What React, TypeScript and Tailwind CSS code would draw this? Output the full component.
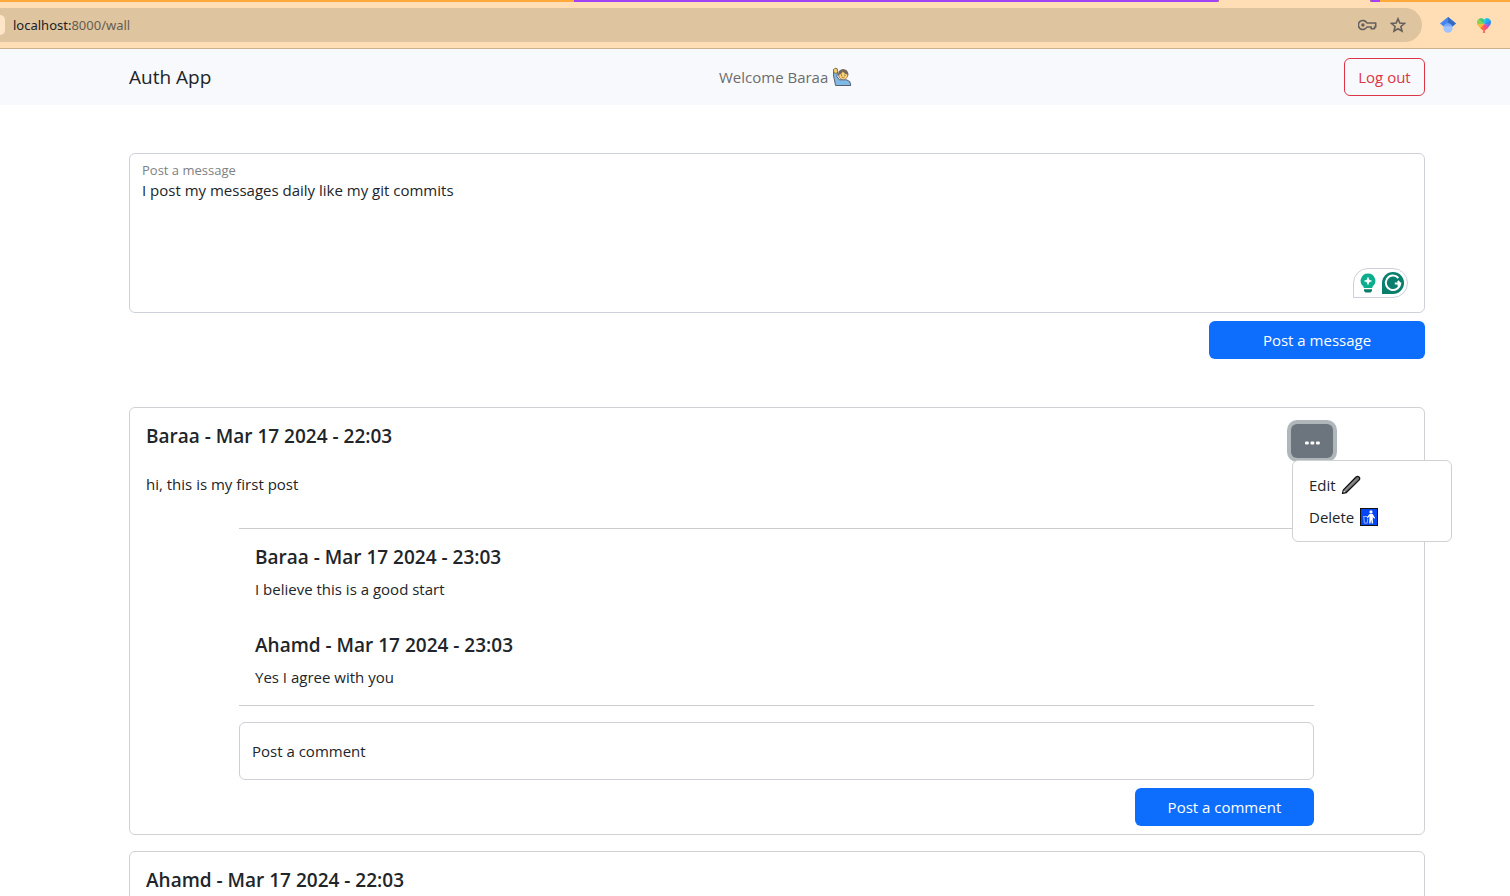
import React from "react";

function WaveEmoji() {
  return (
    <svg className="h-5 w-5" viewBox="0 0 20 20" aria-hidden="true">
      <path d="M1.500 2.500 4.600 1.500 5.600 4.500 4.900 9.600 7.500 12.800H14.500L17.800 14.600 18.800 18.500H3.600L1.600 9Z" fill="#7fb9e6" stroke="#5b6068" strokeWidth="1" strokeLinejoin="round" />
      <path d="M1.400 2.800 3 1.200 5.200 1.800 5.700 4.600 4.600 6.400 2 5.800Z" fill="#f6cf73" stroke="#6b5a45" strokeWidth=".7" />
      <circle cx="11.200" cy="7.300" r="5.200" fill="#75665a" />
      <path d="M7 7.800C9.200 7.400 10.200 6 10.800 4.600c1 1.600 2.600 2.600 4.600 2.800.2 3-1.600 4.800-4.200 4.800S7.200 10.600 7 7.800Z" fill="#fbd276" />
      <circle cx="9.600" cy="8.100" r=".6" fill="#444" />
      <circle cx="12.900" cy="8.100" r=".6" fill="#444" />
      <path d="M9.700 10q1.500 1.200 3 0" fill="none" stroke="#9a5b3c" strokeWidth=".7" />
    </svg>
  );
}

function PenEmoji() {
  return (
    <svg className="h-5 w-5" viewBox="0 0 20 20" aria-hidden="true">
      <path d="M1.500 18.400 2.400 14.900 14.800 2.200q1.800-1.500 3.200-.2t0 3.100L5.300 17.500Z" fill="#767676" stroke="#111" strokeWidth="1.300" strokeLinejoin="round" />
      <path d="m4.200 15.300 10.600-10.700" stroke="#9c9c9c" strokeWidth="1" />
      <path d="m2.300 17.600.6-2.200 1.600 1.500Z" fill="#ddd" />
    </svg>
  );
}

function LitterEmoji() {
  return (
    <svg className="h-5 w-5" viewBox="0 0 20 20" aria-hidden="true">
      <rect x="1.500" y="1.500" width="17" height="17" fill="#0546f5" stroke="#111" />
      <circle cx="12" cy="4.900" r="1.600" fill="#fff" />
      <path d="M10.500 7h3.200l2.400 4-.9.7-1.400-1.800.2 6.600h-1.300l-.5-4-.7 4h-1.300l.3-7.200-1.800 1.900-.9-.6Z" fill="#fff" />
      <path d="M4.200 9.500h4.400M4.800 9.500l.5 6.600h3l.4-4.400" fill="none" stroke="#b9ccff" strokeWidth=".8" />
    </svg>
  );
}

function BrowserBar() {
  return (
    <div className="border-b border-[#cbb18e] bg-[#ffddb5]">
      <div className="flex h-0.5 bg-[#ffa93b]" aria-hidden="true">
        <div className="w-[38%]" />
        <div className="grow rounded-br-full bg-[#a142f4]" />
        <div className="w-[10%] bg-[#ffddb5]" />
        <div className="w-2.5 rounded-bl-full bg-[#a142f4]" />
        <div className="w-[130px]" />
      </div>
      <div className="flex items-center pt-1.5 pb-1.5 pr-[18px]">
        <div className="flex h-[34px] grow items-center overflow-hidden rounded-r-full bg-[#dfc4a0] pr-4">
          <div className="h-5 w-[5px] rounded-r-full bg-[#ffe5c7]" />
          <span className="grow pl-2 font-['Noto_Sans'] text-[13px] leading-5 text-[#675c4f]">
            <span className="text-[#202124]">localhost:</span>8000/wall
          </span>
          <button type="button" aria-label="Saved passwords" className="mr-3 text-[#65605b]">
            <svg className="h-5 w-5" viewBox="0 0 20 20" fill="none" stroke="currentColor">
              <path d="M8.900 8H17.700V12H16.500V13.800H13.200V12H8.900A4.500 4.500 0 1 1 8.900 8Z" strokeWidth="1.600" strokeLinejoin="round" />
              <circle cx="4.900" cy="10" r="1.700" fill="currentColor" stroke="none" />
            </svg>
          </button>
          <button type="button" aria-label="Bookmark this page" className="text-[#65605b]">
            <svg className="h-4 w-4" viewBox="0 0 16 16" fill="none" stroke="currentColor" strokeWidth="1.600">
              <path d="m8 1.800 1.800 4.300 4.700.4-3.600 3 1.100 4.600L8 11.700l-4 2.400 1.100-4.600-3.600-3 4.700-.4Z" />
            </svg>
          </button>
        </div>
        <button type="button" aria-label="Scholar extension" className="ml-[18px]">
          <svg className="h-4 w-4" viewBox="0 0 16 16">
            <path d="M8 0 0 6.500 4 9.800h8l4-3.300Z" fill="#4285f4" />
            <path d="m8 0 8 6.500-4 3.300L8 6.500Z" fill="#356ac3" />
            <circle cx="8" cy="11.200" r="4.600" fill="#a0c3ff" />
            <path d="M3.800 9.300a4.600 4.600 0 0 1 8.400 0Z" fill="#76a7fa" />
          </svg>
        </button>
        <button type="button" aria-label="Heart extension" className="ml-5">
          <svg className="h-4 w-4" viewBox="0 0 16 16">
            <clipPath id="heart">
              <path d="M8 14.200C4 11 1 8.400 1 5 1 1.200 6 0 8 2.400 10 0 15 1.200 15 5c0 3.400-3 6-7 9.200Z" />
            </clipPath>
            <g clipPath="url(#heart)">
              <path d="M8 7 0 0v8Z" fill="#8bd14f" />
              <path d="M8 7 0 0h8Z" fill="#45c96f" />
              <path d="M8 7V0h4Z" fill="#35cfe2" />
              <path d="M8 7 11 0h5v4Z" fill="#18b3f3" />
              <path d="m8 7 8-4v6Z" fill="#3c86ee" />
              <path d="m8 7 8 1-4 5Z" fill="#b35be0" />
              <path d="m8 7 5 5-5 4Z" fill="#ff4e72" />
              <path d="M8 7v9l-5-4Z" fill="#ff6c3f" />
              <path d="m8 7-5 6-3-6Z" fill="#f7ba36" />
            </g>
            <path d="m8 13-1.300 2.800h2.600Z" fill="#ee5238" />
          </svg>
        </button>
      </div>
    </div>
  );
}

function Entry({ title, text, gap }: { title: string; text?: string; gap: string }) {
  return (
    <div className={`flex flex-col ${gap}`}>
      <h5 className="text-[19px] leading-6 font-semibold">{title}</h5>
      {text && <p>{text}</p>}
    </div>
  );
}

function GrammarBadge() {
  return (
    <div className="absolute right-4 bottom-[14px] flex h-[30px] w-[55px] items-center justify-between rounded-full rounded-bl-none border border-[#cdd0dc] bg-white pr-[3px] pl-1.5">
      <svg className="h-5 w-4" viewBox="0 0 16 20" aria-hidden="true">
        <path d="M8 .5a7.400 7.400 0 0 1 4.300 13.400V15H3.700v-1.100A7.400 7.400 0 0 1 8 .5Z" fill="#0cad8c" />
        <path d="M4 16.200h8V18l-1.500 1.500h-5L4 18Z" fill="#087d68" />
        <path d="m8 3.600 1.300 3.100L12.400 8 9.300 9.300 8 12.400 6.700 9.300 3.600 8l3.100-1.300Z" fill="#fff" />
      </svg>
      <svg className="h-[22px] w-[22px]" viewBox="0 0 22 22" aria-hidden="true">
        <path d="M11 0a11 11 0 1 1 0 22H0V11A11 11 0 0 1 11 0Z" fill="#087f6c" />
        <path d="M16.400 6A7.200 7.200 0 1 0 18.200 11.500H12.800M15.800 9 18.200 11.500 16 14" fill="none" stroke="#fff" strokeWidth="2" />
      </svg>
    </div>
  );
}

function PostMenu() {
  return (
    <div className="relative mr-[75px]">
      <button type="button" aria-label="Post options" aria-expanded="true" className="flex h-[34px] w-[42px] items-center justify-center rounded-md bg-[#6c757d] pt-1 ring-4 ring-[#b0b7bb]">
        <svg className="h-1 w-4" viewBox="0 0 16 4" fill="#fff">
          <rect x="1" y="0.500" width="3.800" height="3" rx="1" />
          <rect x="6.500" y="0.500" width="3.800" height="3" rx="1" />
          <rect x="12" y="0.500" width="3.800" height="3" rx="1" />
        </svg>
      </button>
      <div className="absolute top-9 left-px z-10 w-40 rounded-md border border-[#d0d1d2] bg-white py-2">
        <button type="button" className="flex h-8 w-full items-center gap-[5px] px-4">
          Edit <PenEmoji />
        </button>
        <button type="button" className="flex h-8 w-full items-center gap-[5px] px-4">
          Delete <LitterEmoji />
        </button>
      </div>
    </div>
  );
}

export default function App() {
  return (
    <div className="h-screen overflow-hidden bg-white font-['Open_Sans','Noto_Sans',sans-serif] text-[15px] leading-6 text-[#212529]">
      <BrowserBar />
      <nav className="flex h-14 items-center justify-between bg-[#f8f9fc] pr-[85px] pl-[129px]">
        <a href="#" className="mr-4 text-[19px] leading-8">Auth App</a>
        <span className="flex items-center gap-1 text-[#6c6d6f]">
          Welcome Baraa <WaveEmoji />
        </span>
        <button type="button" className="h-[38px] w-[81px] rounded-md border border-[#dc3545] text-[#dc3545]">Log out</button>
      </nav>

      <main className="pt-12 pr-[85px] pl-[129px]">
        <form className="flex flex-col items-end gap-2">
          <div className="relative flex h-40 w-full flex-col rounded-md border border-[#ced0da] px-3 pt-2">
            <label htmlFor="message" className="text-[13px] leading-4 text-[#808182]">Post a message</label>
            <textarea id="message" className="w-full grow resize-none bg-transparent outline-none" spellCheck={false} defaultValue="I post my messages daily like my git commits" />
            <GrammarBadge />
          </div>
          <button type="button" className="h-[38px] w-1/6 rounded-md bg-[#0d6efd] text-white">Post a message</button>
        </form>

        <article className="mt-12 rounded-md border border-[#d0d1d5] pt-4 pb-2">
          <div className="flex items-start justify-between px-4">
            <Entry title="Baraa - Mar 17 2024 - 22:03" text="hi, this is my first post" gap="gap-6" />
            <PostMenu />
          </div>
          <div className="mt-8 mr-[110px] ml-[109px]">
            <section className="flex flex-col gap-8 border-y border-[#cbccce] p-4">
              <Entry title="Baraa - Mar 17 2024 - 23:03" text="I believe this is a good start" gap="gap-2" />
              <Entry title="Ahamd - Mar 17 2024 - 23:03" text="Yes I agree with you" gap="gap-2" />
            </section>
            <form className="mt-4 flex flex-col items-end gap-2">
              <input aria-label="Post a comment" placeholder="Post a comment" className="h-[58px] w-full rounded-md border border-[#ced0d6] px-3 outline-none placeholder:text-[#212529]" />
              <button type="button" className="h-[38px] w-1/6 rounded-md bg-[#0d6efd] text-white">Post a comment</button>
            </form>
          </div>
        </article>

        <article className="mt-4 rounded-md border border-[#d0d1d5] p-4">
          <Entry title="Ahamd - Mar 17 2024 - 22:03" gap="gap-6" />
        </article>
      </main>
    </div>
  );
}
